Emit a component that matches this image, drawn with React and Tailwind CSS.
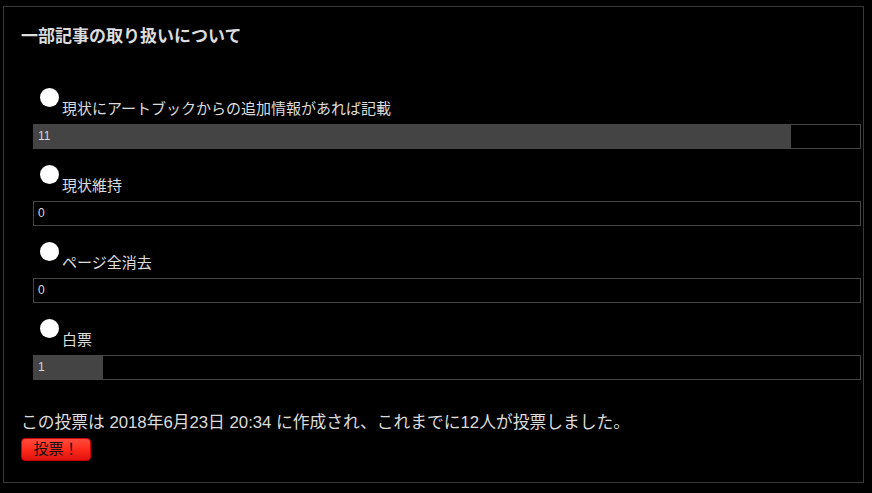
import React from 'react';

const options = [
    { label: '現状にアートブックからの追加情報があれば記載', votes: 11 },
    { label: '現状維持', votes: 0 },
    { label: 'ページ全消去', votes: 0 },
    { label: '白票', votes: 1 },
];

const total = 12;

const PollOption = ({ option, first }) => {
    const pct = (option.votes / total) * 100;
    return (
        <div className={first ? 'pt-[39px]' : 'pt-[16px]'}>
            <label className="flex h-[36px] pl-[19px]">
                <input
                    type="radio"
                    name="poll"
                    className="appearance-none w-[19px] h-[19px] rounded-full bg-white shrink-0 m-0"
                />
                <span className="ml-[3px] mt-[11px] text-[15px] leading-[20px] text-[#dcdcdc]">
                    {option.label}
                </span>
            </label>
            <div className="ml-[12px] w-[828px] h-[25px] border border-[#454545] bg-black">
                <div className="relative h-full">
                    <div className="h-full bg-[#444444]" style={{ width: `${pct}%` }}></div>
                    <span className="absolute left-[4px] top-[4px] text-[12px] leading-[14px] text-[#d8d8d8]">
                        {option.votes}
                    </span>
                </div>
            </div>
        </div>
    );
};

const App = () => {
    return (
        <div
            className="w-[872px] h-[493px] bg-black overflow-hidden pt-[6px] pl-[3px]"
            style={{ fontFamily: '"Liberation Sans", "Noto Sans CJK JP", sans-serif' }}
        >
            <div className="w-[861px] h-[477px] border border-[#3a3a3a] pl-[17px] pt-[18px]">
                <h1 className="text-[17px] leading-[24px] font-bold text-[#dcdcdc]">一部記事の取り扱いについて</h1>
                {options.map((option, index) => (
                    <PollOption key={index} option={option} first={index === 0} />
                ))}
                <p className="mt-[31px] text-[16.75px] leading-[24px] text-[#dcdcdc] whitespace-nowrap">
                    この投票は 2018年6月23日 20:34 に作成され、これまでに12人が投票しました。
                </p>
                <button className="mt-[3px] w-[70px] h-[23px] rounded-[4px] border border-[#c80000] bg-gradient-to-b from-[#ff4a3c] via-[#ff2a1a] to-[#e01010] text-[15px] leading-[20px] text-[#111] pb-[1px]">
                    投票！
                </button>
            </div>
        </div>
    );
};

export default App;
